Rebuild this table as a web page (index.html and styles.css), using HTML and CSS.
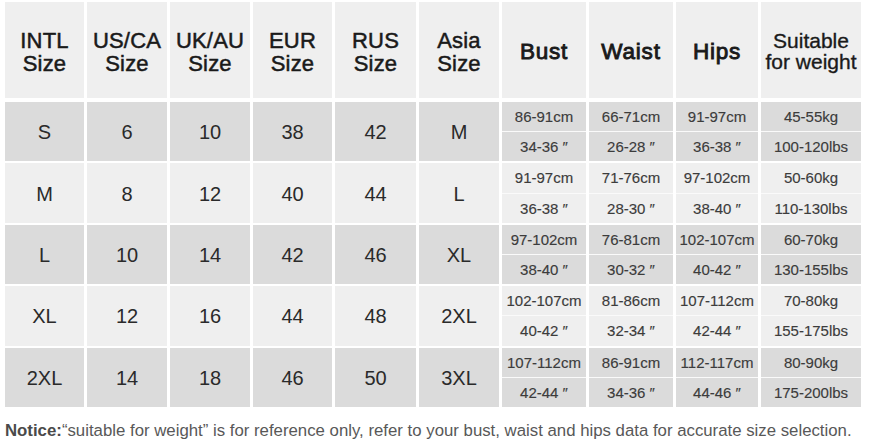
FILE: index.html
```html
<!DOCTYPE html>
<html>
<head>
<meta charset="utf-8">
<link rel="stylesheet" href="styles.css">
</head>
<body>
<div class="page">
  <div class="grid head">
    <div class="hc"><span>INTL</span><span>Size</span></div>
    <div class="hc"><span>US/CA</span><span>Size</span></div>
    <div class="hc"><span>UK/AU</span><span>Size</span></div>
    <div class="hc"><span>EUR</span><span>Size</span></div>
    <div class="hc"><span>RUS</span><span>Size</span></div>
    <div class="hc"><span>Asia</span><span>Size</span></div>
    <div class="hc strong"><span>Bust</span></div>
    <div class="hc strong"><span>Waist</span></div>
    <div class="hc strong"><span>Hips</span></div>
    <div class="hc small"><span>Suitable</span><span>for weight</span></div>
  </div>
  <div class="grid body">
    <div class="c dark">S</div><div class="c dark">6</div><div class="c dark">10</div><div class="c dark">38</div><div class="c dark">42</div><div class="c dark">M</div>
    <div class="m dark"><span>86-91cm</span><span>34-36 ″</span></div>
    <div class="m dark"><span>66-71cm</span><span>26-28 ″</span></div>
    <div class="m dark"><span>91-97cm</span><span>36-38 ″</span></div>
    <div class="m dark"><span>45-55kg</span><span>100-120lbs</span></div>

    <div class="c light">M</div><div class="c light">8</div><div class="c light">12</div><div class="c light">40</div><div class="c light">44</div><div class="c light">L</div>
    <div class="m light"><span>91-97cm</span><span>36-38 ″</span></div>
    <div class="m light"><span>71-76cm</span><span>28-30 ″</span></div>
    <div class="m light"><span>97-102cm</span><span>38-40 ″</span></div>
    <div class="m light"><span>50-60kg</span><span>110-130lbs</span></div>

    <div class="c dark">L</div><div class="c dark">10</div><div class="c dark">14</div><div class="c dark">42</div><div class="c dark">46</div><div class="c dark">XL</div>
    <div class="m dark"><span>97-102cm</span><span>38-40 ″</span></div>
    <div class="m dark"><span>76-81cm</span><span>30-32 ″</span></div>
    <div class="m dark"><span>102-107cm</span><span>40-42 ″</span></div>
    <div class="m dark"><span>60-70kg</span><span>130-155lbs</span></div>

    <div class="c light">XL</div><div class="c light">12</div><div class="c light">16</div><div class="c light">44</div><div class="c light">48</div><div class="c light">2XL</div>
    <div class="m light"><span>102-107cm</span><span>40-42 ″</span></div>
    <div class="m light"><span>81-86cm</span><span>32-34 ″</span></div>
    <div class="m light"><span>107-112cm</span><span>42-44 ″</span></div>
    <div class="m light"><span>70-80kg</span><span>155-175lbs</span></div>

    <div class="c dark">2XL</div><div class="c dark">14</div><div class="c dark">18</div><div class="c dark">46</div><div class="c dark">50</div><div class="c dark">3XL</div>
    <div class="m dark"><span>107-112cm</span><span>42-44 ″</span></div>
    <div class="m dark"><span>86-91cm</span><span>34-36 ″</span></div>
    <div class="m dark"><span>112-117cm</span><span>44-46 ″</span></div>
    <div class="m dark"><span>80-90kg</span><span>175-200lbs</span></div>
  </div>
  <p class="notice"><b>Notice:</b>“suitable for weight” is for reference only, refer to your bust, waist and hips data for accurate size selection.</p>
</div>
</body>
</html>
```

FILE: styles.css
```css
html, body {
  margin: 0;
  padding: 0;
  background: #ffffff;
}
.page {
  padding: 2px 0 0 5px;
  font-family: "Liberation Sans", Arial, sans-serif;
}
.grid {
  display: grid;
  grid-template-columns: 79px 80px 80px 79px 81px 80px 84px 84px 82px 100px;
  column-gap: 3px;
}
.head {
  grid-template-rows: 96px;
}
.body {
  margin-top: 4px;
  grid-template-rows: repeat(5, 59.4px);
  row-gap: 2px;
}
.hc {
  background: #efefef;
  display: flex;
  flex-direction: column;
  align-items: center;
  justify-content: center;
  text-align: center;
  font-size: 22px;
  color: #1a1a1a;
  -webkit-text-stroke: 0.5px #1a1a1a;
  padding-top: 4px;
  box-sizing: border-box;
}
.hc span {
  display: block;
  height: 23.5px;
  line-height: 23.5px;
  white-space: nowrap;
  letter-spacing: 0.2px;
}
.hc.strong {
  font-size: 22.5px;
  -webkit-text-stroke: 0.9px #1a1a1a;
}
.hc.strong span {
  letter-spacing: 0.8px;
}
.hc.small {
  font-size: 21px;
  padding-top: 2px;
  -webkit-text-stroke: 0.35px #1a1a1a;
}
.hc.small span {
  height: 21.5px;
  line-height: 21.5px;
  letter-spacing: 0;
}
.c {
  display: flex;
  align-items: center;
  justify-content: center;
  font-size: 20px;
  color: #2a2a2a;
  padding-top: 2px;
  box-sizing: border-box;
}
.c.dark { background: #dbdbdb; }
.c.light { background: #efefef; }
.m {
  display: flex;
  flex-direction: column;
  gap: 1px;
  background: #fafafa;
}
.m span {
  flex: 1;
  display: flex;
  align-items: center;
  justify-content: center;
  font-size: 15px;
  color: #3c3c3c;
  -webkit-text-stroke: 0.15px #3c3c3c;
}
.m.dark span { background: #dbdbdb; }
.m.light span { background: #efefef; }
.notice {
  margin: 14px 0 0 0;
  font-size: 16.8px;
  color: #585858;
  white-space: nowrap;
}
.notice b {
  color: #4a4a4a;
}
```
